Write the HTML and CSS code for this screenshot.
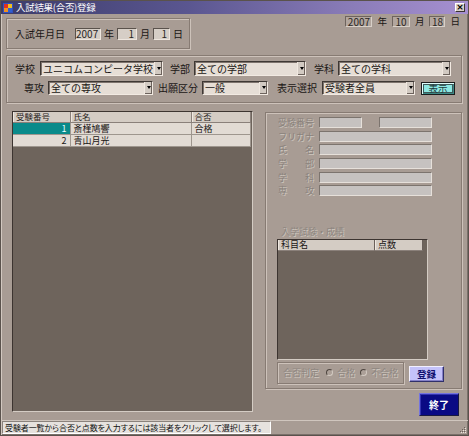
FILE: index.html
```html
<!DOCTYPE html>
<html lang="ja">
<head>
<meta charset="utf-8">
<title>入試結果(合否)登録</title>
<link rel="stylesheet" href="styles.css">
</head>
<body>
<div class="window">
  <div class="titlebar">
    <svg class="appicon" width="10" height="10" viewBox="0 0 10 10">
      <rect x="0" y="0" width="10" height="10" fill="#e8e8f0"/>
      <rect x="0.5" y="0.5" width="9" height="9" fill="none" stroke="#3050c0"/>
      <rect x="1" y="1" width="4" height="4" fill="#e03020"/>
      <rect x="5" y="1" width="4" height="4" fill="#f0c020"/>
      <rect x="1" y="5" width="4" height="4" fill="#f09020"/>
      <rect x="5" y="5" width="4" height="4" fill="#3060d0"/>
    </svg>
    <span class="title">入試結果(合否)登録</span>
    <span class="close">×</span>
  </div>

  <div class="toprow">
    <div class="group dategroup">
      <span class="lbl">入試年月日</span>
      <span class="tb w-year m-year">2007</span>
      <span class="unit">年</span>
      <span class="tb w-mon">1</span>
      <span class="unit">月</span>
      <span class="tb w-day">1</span>
      <span class="unit">日</span>
    </div>
    <div class="today">
      <span class="db w-tyear">2007</span>
      <span class="tunit">年</span>
      <span class="db w-tmon">10</span>
      <span class="tunit">月</span>
      <span class="db w-tday">18</span>
      <span class="tunit">日</span>
    </div>
  </div>

  <div class="group filters">
    <div class="frow">
      <span class="lbl ml-8">学校</span>
      <div class="sel ml-5 w-123"><span class="seltext">ユニコムコンピータ学校</span><span class="arr"></span></div>
      <span class="lbl ml-7">学部</span>
      <div class="sel ml-4 w-112"><span class="seltext">全ての学部</span><span class="arr"></span></div>
      <span class="lbl ml-8">学科</span>
      <div class="sel ml-4 w-113"><span class="seltext">全ての学科</span><span class="arr"></span></div>
    </div>
    <div class="frow r2">
      <span class="lbl ml-17">専攻</span>
      <div class="sel ml-4 w-105"><span class="seltext">全ての専攻</span><span class="arr"></span></div>
      <span class="lbl ml-5">出願区分</span>
      <div class="sel ml-4 w-66"><span class="seltext">一般</span><span class="arr"></span></div>
      <span class="lbl ml-9">表示選択</span>
      <div class="sel ml-5 w-93"><span class="seltext">受験者全員</span><span class="arr"></span></div>
      <button class="showbtn"><span>表示</span></button>
    </div>
  </div>

  <div class="main">
    <div class="list">
      <table class="grid">
        <colgroup><col class="c1"><col class="c2"><col class="c3"></colgroup>
        <thead>
          <tr><th>受験番号</th><th>氏名</th><th>合否</th></tr>
        </thead>
        <tbody>
          <tr class="sel-row"><td class="num hl">1</td><td>斎槿鳩響</td><td>合格</td></tr>
          <tr><td class="num">2</td><td>青山月光</td><td></td></tr>
        </tbody>
      </table>
    </div>

    <div class="rightcol">
      <div class="group detail">
        <div class="drow">
          <span class="dlabel"><span>受</span><span>験</span><span>番</span><span>号</span></span>
          <span class="dbox w-43"></span>
          <span class="dbox w-53 ml-17"></span>
        </div>
        <div class="drow">
          <span class="dlabel"><span>フ</span><span>リ</span><span>ガ</span><span>ナ</span></span>
          <span class="dbox w-113b"></span>
        </div>
        <div class="drow">
          <span class="dlabel"><span>氏</span><span>名</span></span>
          <span class="dbox w-113b"></span>
        </div>
        <div class="drow">
          <span class="dlabel"><span>学</span><span>部</span></span>
          <span class="dbox w-113b"></span>
        </div>
        <div class="drow">
          <span class="dlabel"><span>学</span><span>科</span></span>
          <span class="dbox w-113b"></span>
        </div>
        <div class="drow">
          <span class="dlabel"><span>専</span><span>攻</span></span>
          <span class="dbox w-113b"></span>
        </div>

        <div class="seclabel dis">入学試験・成績</div>
        <div class="scores">
          <div class="shead"><span class="sh1">科目名</span><span class="sh2">点数</span></div>
        </div>

        <div class="judgerow">
          <div class="group judge">
            <span class="dis">合否判定</span>
            <span class="radio ml-r1"></span><span class="dis ml-r2">合格</span>
            <span class="radio ml-r3"></span><span class="dis ml-r2">不合格</span>
          </div>
          <button class="regbtn">登録</button>
        </div>
      </div>
      <button class="endbtn">終了</button>
    </div>
  </div>

  <div class="status">
    <div class="stext">受験者一覧から合否と点数を入力するには該当者をクリックして選択します。</div>
    <svg class="grip" width="9" height="9" viewBox="0 0 9 9">
      <rect x="6" y="1" width="1" height="1" fill="#6a605a"/>
      <rect x="4" y="3" width="1" height="1" fill="#6a605a"/>
      <rect x="6" y="3" width="1" height="1" fill="#6a605a"/>
      <rect x="2" y="5" width="1" height="1" fill="#6a605a"/>
      <rect x="4" y="5" width="1" height="1" fill="#6a605a"/>
      <rect x="6" y="5" width="1" height="1" fill="#6a605a"/>
      <rect x="7" y="2" width="1" height="1" fill="#ece4dc"/>
      <rect x="5" y="4" width="1" height="1" fill="#ece4dc"/>
      <rect x="7" y="4" width="1" height="1" fill="#ece4dc"/>
      <rect x="3" y="6" width="1" height="1" fill="#ece4dc"/>
      <rect x="5" y="6" width="1" height="1" fill="#ece4dc"/>
      <rect x="7" y="6" width="1" height="1" fill="#ece4dc"/>
    </svg>
  </div>
</div>
</body>
</html>
```

FILE: styles.css
```css
* { box-sizing: border-box; }
html, body { margin: 0; padding: 0; }
body {
  width: 469px;
  height: 436px;
  overflow: hidden;
  background: #a79b93;
  font-family: "Noto Sans CJK JP", "Noto Sans", sans-serif;
  font-size: 10px;
  line-height: 1;
  color: #1a1614;
}

.window {
  width: 469px;
  height: 436px;
  display: flex;
  flex-direction: column;
  background: #a89c94;
  border: 1px solid #5a524c;
  box-shadow: inset 1px 0 0 #d2c8c0, inset -1px -1px 0 #7a706a;
}

/* title bar */
.titlebar {
  flex: none;
  height: 13px;
  display: flex;
  align-items: center;
  padding: 0 2px 0 2px;
  background: linear-gradient(to right, #3c3c6a 0%, #5a5690 40%, #8a7cb8 75%, #a690d0 100%);
  color: #fff;
}
.appicon { flex: none; }
.title { margin-left: 3px; font-size: 9.5px; letter-spacing: -0.3px; }
.close {
  margin-left: auto;
  margin-right: 1px;
  width: 10px;
  height: 9px;
  background: #d6cec6;
  border: 1px solid;
  border-color: #ffffff #3a3432 #3a3432 #ffffff;
  color: #000;
  font-size: 9px;
  line-height: 6px;
  text-align: center;
  font-family: "DejaVu Sans", sans-serif;
  font-weight: bold;
}

/* generic */
.group {
  border: 1px solid #877b73;
  box-shadow: inset 1px 1px 0 #cdc2ba, 1px 1px 0 #cdc2ba;
}
.lbl { flex: none; white-space: nowrap; font-size: 10px; }
.dis { color: #8e8680; text-shadow: 1px 1px 0 #cfc7bf; white-space: nowrap; }

/* top row */
.toprow {
  flex: none;
  display: flex;
  align-items: flex-start;
  padding: 0 8px 0 5px;
}
.dategroup {
  margin-top: 4px;
  width: 184px;
  height: 31px;
  display: flex;
  align-items: center;
  padding-left: 8px;
}
.tb {
  display: block;
  height: 12px;
  background: #d6cec6;
  border: 1px solid;
  border-color: #5a524c #eee6de #eee6de #5a524c;
  text-align: right;
  padding-right: 2px;
  font-size: 10px;
  line-height: 10px;
  color: #2a2624;
}
.w-year { width: 26px; }
.m-year { margin-left: 10px; }
.w-mon { width: 20px; }
.w-day { width: 17px; }
.unit { margin: 0 3px 0 3px; }

.today {
  margin-left: auto;
  margin-top: 2px;
  display: flex;
  align-items: center;
}
.db {
  display: block;
  height: 11px;
  background: #b2a69e;
  border: 1px solid;
  border-color: #6e645e #d8d0c8 #d8d0c8 #6e645e;
  text-align: center;
  font-size: 10px;
  line-height: 9px;
  color: #2a2624;
}
.w-tyear { width: 27px; }
.w-tmon { width: 18px; }
.w-tday { width: 16px; }
.tunit { margin: 0 5px 0 5px; font-size: 9.5px; }
.tunit:last-child { margin-right: 0; }

/* filters */
.filters {
  flex: none;
  margin: 6px 6px 0 5px;
  height: 48px;
  padding-top: 5px;
}
.frow { display: flex; align-items: center; height: 15px; }
.frow.r2 { margin-top: 5px; height: 14px; }
.sel {
  flex: none;
  height: 15px;
  display: flex;
  align-items: stretch;
  background: #e6ded6;
  border: 1px solid;
  border-color: #3e3834 #f2eae2 #f2eae2 #3e3834;
  box-shadow: inset 1px 1px 0 #7e746e;
}
.r2 .sel { height: 14px; }
.seltext {
  padding: 0 0 0 2px;
  font-size: 10px;
  line-height: 13px;
  white-space: nowrap;
  color: #1a1614;
}
.r2 .seltext { line-height: 12px; }
.arr {
  flex: none;
  margin-left: auto;
  width: 8px;
  background: #d2cac2;
  border-left: 1px solid #f0e8e0;
  box-shadow: inset -1px -1px 0 #6c625c;
  position: relative;
}
.arr::after {
  content: "";
  position: absolute;
  left: 2px;
  top: 5px;
  border-left: 2px solid transparent;
  border-right: 2px solid transparent;
  border-top: 3px solid #000;
}
.r2 .arr::after { top: 4px; }
.w-123 { width: 123px; }
.w-112 { width: 112px; }
.w-113 { width: 113px; }
.w-105 { width: 105px; }
.w-66 { width: 66px; }
.w-93 { width: 93px; }
.ml-4 { margin-left: 4px; }
.ml-5 { margin-left: 5px; }
.ml-7 { margin-left: 7px; }
.ml-8 { margin-left: 8px; }
.ml-9 { margin-left: 9px; }
.ml-17 { margin-left: 17px; }

.showbtn {
  flex: none;
  margin-left: 6px;
  width: 34px;
  height: 13px;
  padding: 1px;
  background: #8ee8e2;
  border: 1px solid #1c1c1c;
  box-shadow: inset 1px 1px 0 #e0fffc, inset -1px -1px 0 #3c8884;
  font-family: inherit;
  font-size: 9.5px;
  color: #1e3c3c;
  display: flex;
}
.showbtn span {
  flex: 1;
  border: 1px solid #3e5a5a;
  line-height: 7px;
  text-align: center;
}

/* main */
.main {
  flex: none;
  display: flex;
  align-items: flex-start;
  margin-top: 8px;
  padding-left: 11px;
}
.list {
  flex: none;
  width: 241px;
  height: 301px;
  background: #6e645c;
  border: 1px solid;
  border-color: #3c3430 #d4ccc4 #d4ccc4 #3c3430;
}
.grid {
  border-collapse: collapse;
  table-layout: fixed;
  width: 237px;
  font-size: 8.5px;
}
.c1 { width: 57px; }
.c2 { width: 121px; }
.c3 { width: 59px; }
.grid th {
  height: 10px;
  padding: 0 0 0 3px;
  background: #d4ccc4;
  border-right: 1px solid #8a807a;
  border-bottom: 1px solid #8a807a;
  box-shadow: inset 1px 0 0 #f0e8e0;
  text-align: left;
  font-weight: normal;
  line-height: 9px;
  color: #2a2422;
}
.grid td {
  height: 12px;
  padding: 0 0 0 3px;
  background: #e2dbd4;
  border-right: 1px solid #9e968e;
  border-bottom: 1px solid #9e968e;
  line-height: 11px;
  font-size: 9px;
  color: #1a1614;
  white-space: nowrap;
}
.grid td.num { text-align: right; padding: 0 3px 0 0; }
.grid td.hl { background: #0a8a8a; color: #e8ffff; }

.rightcol {
  flex: none;
  width: 197px;
  margin-left: 12px;
  margin-top: 1px;
  display: flex;
  flex-direction: column;
}
.detail {
  height: 277px;
  padding: 3px 0 0 12px;
  display: flex;
  flex-direction: column;
}
.drow {
  display: flex;
  align-items: center;
  height: 13.6px;
}
.dlabel {
  flex: none;
  width: 36px;
  display: flex;
  justify-content: space-between;
  font-size: 9px;
  color: #8a827c;
  text-shadow: 1px 1px 0 #cfc7bf;
}
.dbox {
  flex: none;
  height: 11px;
  margin-left: 5px;
  background: #c6c2c0;
  border: 1px solid;
  border-color: #7c746e #e6e0da #e6e0da #7c746e;
}
.w-43 { width: 43px; }
.w-53 { width: 53px; }
.dbox.ml-17 { margin-left: 17px; }
.w-113b { width: 113px; }

.seclabel {
  margin: 29px 0 0 3px;
  font-size: 9px;
  line-height: 9px;
}
.scores {
  margin: 3px 0 0 -1px;
  width: 151px;
  height: 121px;
  background: #6e645c;
  border: 1px solid;
  border-color: #3c3430 #d4ccc4 #d4ccc4 #3c3430;
}
.shead { display: flex; height: 11px; }
.shead span {
  display: block;
  height: 11px;
  background: #d4ccc4;
  border-right: 1px solid #6a605a;
  border-bottom: 1px solid #8a807a;
  box-shadow: inset 1px 0 0 #f0e8e0;
  padding-left: 3px;
  font-size: 9px;
  line-height: 10px;
  color: #1a1614;
}
.sh1 { width: 97px; }
.sh2 { width: 48px; }

.judgerow {
  display: flex;
  align-items: flex-start;
  margin: 2px 0 0 -1px;
}
.judge {
  flex: none;
  width: 127px;
  height: 22px;
  display: flex;
  align-items: center;
  padding-left: 5px;
  font-size: 9px;
}
.radio {
  flex: none;
  width: 7px;
  height: 7px;
  border-radius: 50%;
  border: 1px solid;
  border-color: #4e4640 #d2cac2 #d2cac2 #4e4640;
  background: #aca098;
}
.ml-r1 { margin-left: 7px; }
.ml-r2 { margin-left: 4px; }
.ml-r3 { margin-left: 5px; }
.regbtn {
  flex: none;
  margin: 4px 0 0 5px;
  width: 35px;
  height: 16px;
  padding: 0;
  background: #c4c2fa;
  border: 1px solid;
  border-color: #f2f0ff #30306a #30306a #f2f0ff;
  box-shadow: inset -1px -1px 0 #8480c8;
  font-family: inherit;
  font-size: 9.5px;
  font-weight: bold;
  color: #101070;
}
.endbtn {
  flex: none;
  align-self: flex-end;
  margin: 4px 3px 0 0;
  width: 40px;
  height: 23px;
  padding: 0;
  background: #0a0a84;
  border: 1px solid;
  border-color: #7474e0 #1a1a40 #1a1a40 #7474e0;
  box-shadow: inset 1px 1px 0 #3434b0;
  font-family: inherit;
  font-size: 10px;
  font-weight: bold;
  color: #ffffff;
}

/* status */
.status {
  flex: none;
  margin-top: auto;
  height: 15px;
  border-top: 1px solid #d0c6be;
  display: flex;
  align-items: flex-end;
  padding: 0 1px 0 1px;
}
.stext {
  width: 269px;
  height: 13px;
  margin-bottom: 1px;
  background: #e6e2de;
  border: 1px solid;
  border-color: #8a827c #ffffff #ffffff #8a827c;
  padding-left: 2px;
  font-size: 8px;
  letter-spacing: -0.1px;
  line-height: 11px;
  white-space: nowrap;
  overflow: hidden;
  font-feature-settings: "palt";
  color: #101010;
}
.grip { margin-left: auto; margin-bottom: 0; }
```
